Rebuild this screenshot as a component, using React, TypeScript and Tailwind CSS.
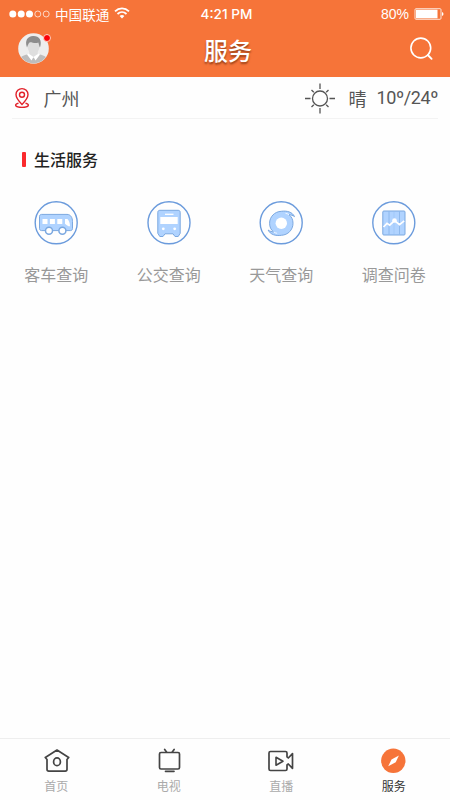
import type { ReactNode } from "react";

type Item = {
  label: string;
  icon: ReactNode;
};

const services: Item[] = [
  { label: "客车查询", icon: <CoachIcon /> },
  { label: "公交查询", icon: <BusIcon /> },
  { label: "天气查询", icon: <TyphoonIcon /> },
  { label: "调查问卷", icon: <SurveyIcon /> }
];

const tabs: Item[] = [
  { label: "首页", icon: <HomeIcon /> },
  { label: "电视", icon: <TvIcon /> },
  { label: "直播", icon: <LiveIcon /> },
  { label: "服务", icon: <CompassIcon /> }
];

function CoachIcon() {
  return (
    <svg viewBox="0 0 44 44" className="size-11" fill="none">
      <circle cx="22.2" cy="21.8" r="21" stroke="#6b9bdc" strokeWidth="1.4" />
      <path d="M7.5 13.4h25.5c3.7 0 5.5 3.2 5.5 7.2v7c0 1.2-.8 2-2 2h-29c-1.2 0-2-.8-2-2V15.4c0-1.2.8-2 2-2z" fill="#b0d3ff" stroke="#7ba8e0" />
      <path d="M8.5 18h5v5h-5zM15.9 18h5v5h-5zM23.3 18h5v5h-5zM31 18h2.4c1.6 1.3 2.6 4 2.6 7.3-2.1 0-3.4-1.2-5-2.6z" fill="#fff" />
      <circle cx="15" cy="29.7" r="3.5" fill="#fff" stroke="#7ba8e0" strokeWidth="1.5" />
      <circle cx="28.4" cy="29.7" r="3.5" fill="#fff" stroke="#7ba8e0" strokeWidth="1.5" />
    </svg>
  );
}

function BusIcon() {
  return (
    <svg viewBox="0 0 44 44" className="size-11" fill="none">
      <circle cx="22" cy="21.8" r="21" stroke="#6b9bdc" strokeWidth="1.4" />
      <path d="M12.8 9.3h18.4c1.2 0 2 .8 2 2v21l-2 3.200h-3.200l-2-2.700h-8l-2 2.700h-3.200l-2-3.200v-21c0-1.200.8-2 2-2z" fill="#b0d3ff" stroke="#7ba8e0" strokeLinejoin="round" />
      <path d="M18 13.3h8.5" stroke="#fff" strokeWidth="1.3" />
      <path d="M13.3 16h17.4v7H13.3z" fill="#fff" />
      <circle cx="16.3" cy="27.8" r="1.4" fill="#fff" />
      <circle cx="27.7" cy="27.8" r="1.4" fill="#fff" />
    </svg>
  );
}

function TyphoonIcon() {
  return (
    <svg viewBox="0 0 44 44" className="size-11" fill="none">
      <circle cx="22.2" cy="21.8" r="21" stroke="#6b9bdc" strokeWidth="1.4" />
      <path
        d="M22.300 10.300C28 9.500 33.300 11 35.500 15.600c-1.700-1.200-3.600-1.800-5.500-1.900 2.700 2 4 5 4 8.600 0 6.600-5 11.700-11.700 12C16.600 35.100 11.300 33.600 9.100 29c1.700 1.200 3.600 1.800 5.500 1.900-2.700-2-4-5-4-8.600 0-6.600 5-11.700 11.700-12z"
        fill="#b0d3ff"
        stroke="#7ba8e0"
        strokeLinejoin="round"
      />
      <path d="M26.500 12.300c1.300.2 2.500.7 3.500 1.400M18.100 32.300c-1.300-.2-2.500-.7-3.500-1.400" stroke="#fff" strokeWidth="0.8" />
      <circle cx="22.300" cy="22.300" r="5.700" fill="#fff" />
    </svg>
  );
}

function SurveyIcon() {
  return (
    <svg viewBox="0 0 44 44" className="size-11" fill="none">
      <circle cx="21.8" cy="21.8" r="21" stroke="#6b9bdc" strokeWidth="1.4" />
      <rect x="10.8" y="10" width="22.2" height="24" rx="1" fill="#b0d3ff" stroke="#7ba8e0" />
      <path d="M17 10.500v23M27.500 10.500v23" stroke="#86b2e9" strokeWidth="0.8" />
      <path d="M22 10.500v23" stroke="#9cc3f5" strokeWidth="0.6" />
      <path d="M11.500 26l3.500-3.700 2.700 1.900 4.800-4.600 5 4 4.700-3.800" stroke="#fff" strokeWidth="1.7" />
      <circle cx="22.500" cy="19.500" r="2.300" fill="#fff" />
    </svg>
  );
}

function HomeIcon() {
  return (
    <svg viewBox="0 0 28 28" className="size-7" fill="none" stroke="#444" strokeWidth="1.7" strokeLinejoin="round" strokeLinecap="round">
      <path d="M5 12.500v9.800c0 1.200.6 1.800 1.800 1.800h16.400c1.200 0 1.800-.6 1.800-1.800v-9.800M3.300 10.500L15 3l11.700 7.500M3.300 10.500L5 12.500M26.700 10.500L25 12.500" />
      <ellipse cx="15" cy="14.800" rx="3.400" ry="3.900" />
    </svg>
  );
}

function TvIcon() {
  return (
    <svg viewBox="0 0 28 28" className="size-7" fill="none" stroke="#444" strokeWidth="1.7" strokeLinecap="round">
      <rect x="4.500" y="5.500" width="20" height="16.500" rx="1.5" />
      <path d="M11.500 5L9.700 2.500M17.300 5l1.800-2.500M10.500 24.300h8.500" />
    </svg>
  );
}

function LiveIcon() {
  return (
    <svg viewBox="0 0 28 28" className="size-7" fill="none" stroke="#444" strokeWidth="1.7" strokeLinejoin="round">
      <path d="M3.500 4.500h15c1 0 1.500.5 1.500 1.500v3.800l1.300 1.200 4.200-4.300v14.600L21.300 17 20 18v4c0 1-.5 1.500-1.500 1.500h-15C2.500 23.500 2 23 2 22V6c0-1 .5-1.500 1.500-1.500z" />
      <path d="M9 10.300v7.900l7-3.900z" strokeWidth="1.6" />
    </svg>
  );
}

function CompassIcon() {
  return (
    <svg viewBox="0 0 28 28" className="size-7">
      <circle cx="13.300" cy="13.800" r="12.200" fill="#f67439" />
      <path d="M18.900 8.500l-3.200 6.800-7.500 4 3.300-6.800z" fill="#fff" />
    </svg>
  );
}

function StatusBar() {
  return (
    <div className="grid h-[27px] grid-cols-[1fr_auto_1fr] items-center pl-[9px] pr-[6px]">
      <div className="flex items-center">
        <svg viewBox="0 0 42 8" className="h-2 w-[42px]" fill="#fff">
          <circle cx="3.800" cy="4" r="3.500" />
          <circle cx="12.200" cy="4" r="3.500" />
          <circle cx="20.500" cy="4" r="3.500" />
          <g fill="none" stroke="#fff" strokeWidth="0.7">
            <circle cx="28.800" cy="4" r="3" />
            <circle cx="37.200" cy="4" r="3" />
          </g>
        </svg>
        <span className="ml-1 text-[13.6px] leading-5">中国联通</span>
        <svg viewBox="0 0 16 12" className="-mt-0.5 ml-[5px] h-3 w-4" fill="none" stroke="#fff" strokeWidth="1.8">
          <path d="M1 4.300c4-3.800 10-3.800 14 0M3.500 7c2.600-2.400 6.400-2.400 9 0" />
          <path d="M5.600 9c1.400-1.200 3.400-1.200 4.800 0L8 11.500z" fill="#fff" stroke="none" />
        </svg>
      </div>
      <span className="font-[Inter,sans-serif] text-[13.6px] font-medium leading-5">4:21 PM</span>
      <div className="flex items-center justify-end">
        <span className="mr-px font-['Liberation_Sans',sans-serif] text-[14px] leading-5">80%</span>
        <svg viewBox="0 0 30 12" className="ml-1 h-3 w-[30px]">
          <rect x="1" y="0.700" width="26" height="10.600" rx="1" fill="none" stroke="#fff" strokeWidth="0.8" />
          <rect x="2" y="1.700" width="21.500" height="8.600" fill="#fff" />
          <path d="M28 4c2 .7 2 3.300 0 4z" fill="#fff" />
        </svg>
      </div>
    </div>
  );
}

function Avatar() {
  return (
    <div className="relative size-[31px]">
      <svg viewBox="0 0 31 31" className="size-[31px]">
        <defs>
          <clipPath id="avatarClip">
            <circle cx="15.500" cy="15.500" r="15" />
          </clipPath>
        </defs>
        <circle cx="15.500" cy="15.500" r="15.300" fill="#eee" />
        <g clipPath="url(#avatarClip)">
          <path d="M2 31v-5c1-3 5-4 8.500-5h10c3.500 1 7.500 2 8.500 5v5z" fill="#bdbdbd" />
          <path d="M11.300 18h8.400v4l-4.200 3-4.200-3z" fill="#dedede" />
          <path d="M10.500 20.500l5 3.500-2 3.500-4.500-6zM20.500 20.500l-5 3.500 2 3.500 4.500-6z" fill="#fff" />
          <ellipse cx="15.500" cy="13.500" rx="6" ry="7.500" fill="#dedede" />
          <path d="M9 14.500C6.500 7.500 9.500 3.500 15 3c6-.3 9.500 4 7 11.500-.8-1-1-3.500-1.700-5-3 1.400-6.800-.5-8.300-.2-1.600.7-2.200 3.400-3 5.200z" fill="#8d8d8d" />
        </g>
      </svg>
      <span className="absolute -right-0.5 top-[1px] size-2 rounded-full border border-[#ffd3c0] bg-[#fb0007]" />
    </div>
  );
}

function Header() {
  return (
    <header className="h-[77px] bg-[#f67439] text-white">
      <StatusBar />
      <div className="grid h-[46px] grid-cols-[1fr_auto_1fr] items-center pl-[18px] pr-4">
        <div className="-mt-1">
          <Avatar />
        </div>
        <h1 className="ml-1 text-[24px] font-medium leading-9 [text-shadow:0_2px_2px_rgba(90,30,0,0.6)]">服务</h1>
        <svg viewBox="0 0 24 24" className="-mt-0.5 size-6 justify-self-end" fill="none" stroke="#fff" strokeWidth="1.6" strokeLinecap="round">
          <circle cx="10.800" cy="11" r="9.900" />
          <path d="M17.800 18l3.800 3.800" strokeWidth="1.9" />
        </svg>
      </div>
    </header>
  );
}

function WeatherRow() {
  return (
    <div className="mx-3 flex h-[42px] items-center border-b border-[#f3f3f3] text-[18px] text-[#555]">
      <svg viewBox="0 0 20 22" className="h-[22px] w-5" fill="none" stroke="#e2222b" strokeWidth="1.4">
        <path d="M10 17.500C6 13.500 4 10.600 4 7.600a6 6 0 0 1 12 0c0 3-2 5.900-6 9.900z" />
        <circle cx="10" cy="7.700" r="2.500" />
        <path d="M6.500 16.300c-4.500.9-4 4.100 3.500 4.100s8-3.200 3.500-4.100" />
      </svg>
      <span className="ml-[11.5px] leading-6">广州</span>
      <svg viewBox="0 0 32 32" className="ml-auto size-8" fill="none" stroke="#555" strokeWidth="1.3">
        <circle cx="16" cy="16.500" r="7.500" />
        <path d="M16 1.500V7M16 26v5.500M1 16.500h5.500M25.500 16.500H31M7.500 8l2.300 2.300M22.200 22.700l2.300 2.300M7.500 25l2.300-2.300M22.200 10.300L24.500 8" />
      </svg>
      <span className="ml-[13px] leading-6">晴</span>
      <span className="ml-[10px] font-[Roboto,sans-serif] text-[18px] leading-6 tracking-[-0.4px]">10º/24º</span>
    </div>
  );
}

export default function App() {
  return (
    <main className="flex h-[800px] w-[450px] flex-col overflow-hidden bg-[#fefefe] font-['Noto_Sans_CJK_SC',sans-serif]">
      <Header />
      <WeatherRow />

      <section className="flex-1">
        <div className="mt-7 flex items-center gap-2 pl-[22px]">
          <span className="h-[15px] w-1 rounded-[1px] bg-[#fa2a2d]" />
          <h2 className="text-[16px] font-medium leading-6 text-[#222]">生活服务</h2>
        </div>
        <div className="mt-[30px] grid grid-cols-4">
          {services.map((s) => (
            <div key={s.label} className="flex flex-col items-center">
              {s.icon}
              <span className="mt-[17px] text-[16px] leading-6 text-[#999]">{s.label}</span>
            </div>
          ))}
        </div>
      </section>

      <nav className="grid h-[62px] grid-cols-4 border-t border-[#eee] pt-2">
        {tabs.map((t) => (
          <div key={t.label} className="flex flex-col items-center">
            {t.icon}
            <span className={`mt-[2px] text-[12px] leading-[18px] ${t.label === "服务" ? "text-[#333]" : "text-[#aaa]"}`}>{t.label}</span>
          </div>
        ))}
      </nav>
    </main>
  );
}
